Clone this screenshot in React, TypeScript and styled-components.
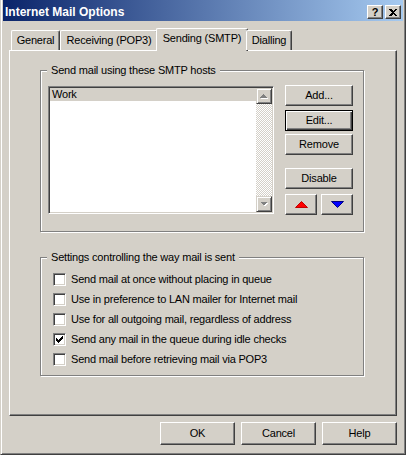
import React from "react";
import styled, { createGlobalStyle } from "styled-components";

const GlobalStyle = createGlobalStyle`
  html, body { margin: 0; padding: 0; background: #d4d0c8; }
  * { box-sizing: border-box; }
`;

const Window = styled.div`
  width: 406px;
  height: 455px;
  background: #d4d0c8;
  border: 1px solid;
  border-top: 0;
  border-color: #d4d0c8 #404040 #404040 #d4d0c8;
  box-shadow: inset 1px 0 #fff, inset -1px -1px #808080;
  padding: 0 2px 2px 2px;
  display: flex;
  flex-direction: column;
  font-family: "Liberation Sans", Arial, sans-serif;
  font-size: 11px;
  letter-spacing: -0.2px;
  color: #000;
`;

const TitleBar = styled.div`
  height: 21px;
  flex: none;
  display: flex;
  align-items: center;
  padding: 3px 2px 0 2px;
  background: linear-gradient(to right, #0a246a, #a6caf0);
`;

const TitleText = styled.div`
  flex: 1;
  color: #fff;
  font-weight: bold;
  font-size: 12px;
  letter-spacing: 0;
  line-height: 18px;
`;

const TitleButtons = styled.div`
  display: flex;
  gap: 2px;
`;

const CaptionButton = styled.div`
  width: 16px;
  height: 14px;
  background: #d4d0c8;
  border: 1px solid;
  border-color: #fff #404040 #404040 #fff;
  box-shadow: inset -1px -1px #808080;
  display: flex;
  align-items: center;
  justify-content: center;
  font-weight: bold;
  font-size: 11px;
  letter-spacing: 0;
  line-height: 12px;
`;

const TabStrip = styled.div`
  display: flex;
  align-items: flex-end;
  height: 22px;
  margin: 7px 0 0 8px;
  position: relative;
  z-index: 1;
`;

const Tab = styled.div<{ $active?: boolean; $w: number }>`
  width: ${(p) => p.$w}px;
  height: ${(p) => (p.$active ? 23 : 20)}px;
  margin: ${(p) => (p.$active ? "0 -2px -1px" : "0")};
  background: #d4d0c8;
  border-top: 1px solid #fff;
  border-left: 1px solid #fff;
  border-right: 1px solid #404040;
  box-shadow: inset -1px 0 #808080;
  border-radius: 2px 2px 0 0;
  padding-top: 3px;
  text-align: center;
  line-height: 13px;
  white-space: nowrap;
`;

const Panel = styled.div`
  margin-left: 6px;
  width: 388px;
  height: 366px;
  flex: none;
  border: 1px solid;
  border-color: #fff #404040 #404040 #fff;
  box-shadow: inset -1px -1px #808080;
  padding: 19px 0 0 30px;
  display: flex;
  flex-direction: column;
`;

const Group = styled.div<{ $h: number; $mt: number }>`
  position: relative;
  width: 324px;
  height: ${(p) => p.$h}px;
  margin-top: ${(p) => p.$mt}px;
  border: 1px solid #808080;
  box-shadow: inset 1px 1px #fff, 1px 1px #fff;
`;

const Legend = styled.span`
  position: absolute;
  top: -7px;
  left: 6px;
  padding: 0 4px;
  background: #d4d0c8;
  line-height: 13px;
  white-space: nowrap;
`;

const HostsBody = styled.div`
  display: flex;
  align-items: flex-start;
  padding: 14px 0 0 7px;
`;

const ListBox = styled.div`
  margin-top: 1px;
  width: 226px;
  height: 128px;
  background: #fff;
  border: 1px solid;
  border-color: #808080 #fff #fff #808080;
  box-shadow: inset 1px 1px #404040, inset -1px -1px #d4d0c8;
  padding: 1px;
  display: flex;
`;

const ListItems = styled.div`
  flex: 1;
  display: flex;
  flex-direction: column;
`;

const ListItem = styled.div<{ $selected?: boolean }>`
  height: 13px;
  line-height: 13px;
  padding-left: 2px;
  background: ${(p) => (p.$selected ? "#d4d0c8" : "transparent")};
`;

const ScrollBar = styled.div`
  width: 16px;
  display: flex;
  flex-direction: column;
  justify-content: space-between;
  background-color: #fff;
  background-image: repeating-conic-gradient(#d4d0c8 0 25%, #fff 0 50%);
  background-size: 2px 2px;
`;

const ScrollButton = styled.div`
  width: 16px;
  height: 16px;
  background: #d4d0c8;
  border: 1px solid;
  border-color: #d4d0c8 #404040 #404040 #d4d0c8;
  box-shadow: inset 1px 1px #fff, inset -1px -1px #808080;
  display: flex;
  align-items: center;
  justify-content: center;
`;

const ButtonColumn = styled.div`
  margin-left: 11px;
  width: 68px;
  display: flex;
  flex-direction: column;
`;

const Button = styled.button<{ $default?: boolean; $mt?: number; $w?: number; $h?: number }>`
  width: ${(p) => (p.$w ? `${p.$w}px` : "100%")};
  height: ${(p) => p.$h ?? 21}px;
  margin: ${(p) => p.$mt ?? 0}px 0 0 0;
  padding: 0;
  background: #d4d0c8;
  color: #000;
  font: inherit;
  letter-spacing: inherit;
  border: 1px solid;
  border-color: ${(p) => (p.$default ? "#000" : "#fff #404040 #404040 #fff")};
  box-shadow: ${(p) =>
    p.$default
      ? "inset 1px 1px #fff, inset -1px -1px #404040, inset -2px -2px #808080"
      : "inset -1px -1px #808080"};
  display: flex;
  align-items: center;
  justify-content: center;
  line-height: 13px;
`;

const ArrowRow = styled.div`
  display: flex;
  gap: 4px;
  margin-top: 5px;
`;

const OptionsBody = styled.div`
  display: flex;
  flex-direction: column;
  gap: 7px;
  padding: 15px 0 0 12px;
`;

const CheckRow = styled.div`
  display: flex;
  align-items: center;
  gap: 5px;
  height: 13px;
  line-height: 13px;
  white-space: nowrap;
`;

const CheckBox = styled.div`
  width: 13px;
  height: 13px;
  flex: none;
  background: #fff;
  border: 1px solid;
  border-color: #808080 #fff #fff #808080;
  box-shadow: inset 1px 1px #404040, inset -1px -1px #d4d0c8;
  display: flex;
  align-items: center;
  justify-content: center;
`;

const Footer = styled.div`
  display: flex;
  justify-content: flex-end;
  gap: 6px;
  margin: 6px 6px 0 0;
`;

const ScrollArrow = ({ down }: { down?: boolean }) => (
  <svg width="8" height="5" viewBox="0 0 8 5" shapeRendering="crispEdges">
    {down ? (
      <>
        <polygon points="1,1 8,1 4.5,4.5" fill="#fff" />
        <polygon points="0,0 7,0 3.5,3.5" fill="#808080" />
      </>
    ) : (
      <>
        <polygon points="4.5,1 8,4.5 1,4.5" fill="#fff" />
        <polygon points="3.5,0 7,3.5 0,3.5" fill="#808080" />
      </>
    )}
  </svg>
);

const Triangle = ({ down }: { down?: boolean }) => (
  <svg width="13" height="7" viewBox="0 0 13 7">
    {down ? (
      <polygon points="0.5,0.5 12.5,0.5 6.5,6.5" fill="#0000ff" stroke="#000080" strokeWidth="1" />
    ) : (
      <polygon points="6.5,0.5 12.5,6.5 0.5,6.5" fill="#ff0000" stroke="#c00000" strokeWidth="1" />
    )}
  </svg>
);

const CheckMark = () => (
  <svg width="7" height="7" viewBox="0 0 7 7" shapeRendering="crispEdges">
    <polygon points="0,2 2,4 6,0 7,0 7,3 2,7 0,5" fill="#000" />
  </svg>
);

const CloseIcon = () => (
  <svg width="8" height="7" viewBox="0 0 8 7" shapeRendering="crispEdges">
    <path d="M0 0h2l2 2 2-2h2L5 3.5 8 7H6L4 5 2 7H0l3-3.5z" fill="#000" />
  </svg>
);

const options = [
  { label: "Send mail at once without placing in queue", checked: false },
  { label: "Use in preference to LAN mailer for Internet mail", checked: false },
  { label: "Use for all outgoing mail, regardless of address", checked: false },
  { label: "Send any mail in the queue during idle checks", checked: true },
  { label: "Send mail before retrieving mail via POP3", checked: false },
];

const tabs = [
  { label: "General", w: 49 },
  { label: "Receiving (POP3)", w: 98 },
  { label: "Sending (SMTP)", w: 92, active: true },
  { label: "Dialling", w: 46 },
];

export default function App() {
  return (
    <>
      <GlobalStyle />
      <Window>
        <TitleBar>
          <TitleText>Internet Mail Options</TitleText>
          <TitleButtons>
            <CaptionButton>?</CaptionButton>
            <CaptionButton>
              <CloseIcon />
            </CaptionButton>
          </TitleButtons>
        </TitleBar>

        <TabStrip>
          {tabs.map((t) => (
            <Tab key={t.label} $w={t.w} $active={t.active}>
              {t.label}
            </Tab>
          ))}
        </TabStrip>

        <Panel>
          <Group $h={162} $mt={0}>
            <Legend>Send mail using these SMTP hosts</Legend>
            <HostsBody>
              <ListBox>
                <ListItems>
                  <ListItem $selected>Work</ListItem>
                </ListItems>
                <ScrollBar>
                  <ScrollButton>
                    <ScrollArrow />
                  </ScrollButton>
                  <ScrollButton>
                    <ScrollArrow down />
                  </ScrollButton>
                </ScrollBar>
              </ListBox>
              <ButtonColumn>
                <Button>Add...</Button>
                <Button $default $mt={4}>Edit...</Button>
                <Button $mt={3}>Remove</Button>
                <Button $mt={13}>Disable</Button>
                <ArrowRow>
                  <Button $w={32}>
                    <Triangle />
                  </Button>
                  <Button $w={32}>
                    <Triangle down />
                  </Button>
                </ArrowRow>
              </ButtonColumn>
            </HostsBody>
          </Group>

          <Group $h={119} $mt={25}>
            <Legend>Settings controlling the way mail is sent</Legend>
            <OptionsBody>
              {options.map((o) => (
                <CheckRow key={o.label}>
                  <CheckBox>{o.checked && <CheckMark />}</CheckBox>
                  <span>{o.label}</span>
                </CheckRow>
              ))}
            </OptionsBody>
          </Group>
        </Panel>

        <Footer>
          <Button $w={75} $h={23}>OK</Button>
          <Button $w={75} $h={23}>Cancel</Button>
          <Button $w={75} $h={23}>Help</Button>
        </Footer>
      </Window>
    </>
  );
}
